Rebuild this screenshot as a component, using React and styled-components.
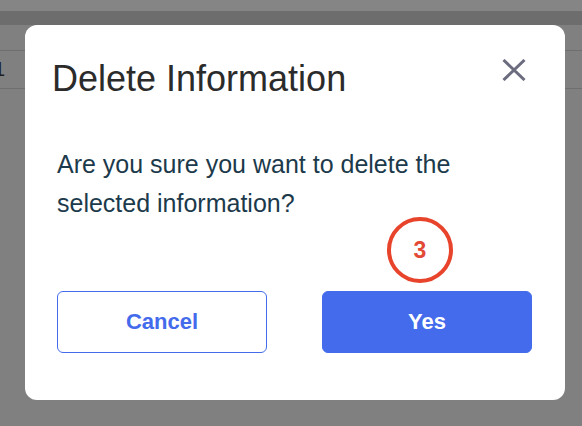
import styled, { createGlobalStyle } from "styled-components";

const GlobalStyle = createGlobalStyle`
  html, body {
    margin: 0;
    padding: 0;
    background: #808080;
    font-family: "Liberation Sans", Arial, sans-serif;
  }
`;

const App = () => {
  return (
    <>
      <GlobalStyle />
      <Page>
        <TopStrip />
        <SubBar />
        <TableRow>
          <Cell>1</Cell>
        </TableRow>
      </Page>
      <Overlay>
        <Modal>
          <Header>
            <Title>Delete Information</Title>
            <CloseButton aria-label="Close">
              <svg width="24" height="22" viewBox="0 0 24 22">
                <path d="M1.5 1 L22.5 21 M22.5 1 L1.5 21" stroke="#6b6d7f" strokeWidth="3" fill="none" />
              </svg>
            </CloseButton>
          </Header>
          <Message>
            Are you sure you want to delete the
            <br />
            selected information?
          </Message>
          <Actions>
            <ActionButton>Cancel</ActionButton>
            <ActionButton primary>Yes</ActionButton>
          </Actions>
          <StepBadge>3</StepBadge>
        </Modal>
      </Overlay>
    </>
  );
};

const Page = styled.div`
  display: flex;
  flex-direction: column;
  height: 426px;
`;

const TopStrip = styled.div`
  height: 11px;
  background: #858585;
`;

const SubBar = styled.div`
  height: 14px;
  background: #6d6d6d;
`;

const TableRow = styled.div`
  display: flex;
  align-items: center;
  margin-top: 25px;
  height: 37px;
  border-top: 1px solid #6f6f6f;
  border-bottom: 1px solid #6f6f6f;
`;

const Cell = styled.span`
  margin-left: -6px;
  font-size: 20px;
  color: #1e1e1e;
`;

const Overlay = styled.div`
  position: fixed;
  inset: 0;
  padding: 25px 17px 0 25px;
`;

const Modal = styled.div`
  position: relative;
  box-sizing: border-box;
  width: 540px;
  height: 375px;
  padding: 33px 33px 47px 32px;
  background: #ffffff;
  border-radius: 12px;
  display: flex;
  flex-direction: column;
`;

const Header = styled.div`
  display: flex;
  justify-content: space-between;
  align-items: flex-start;
  height: 42px;
`;

const Title = styled.h2`
  margin: 0 0 0 -5px;
  font-size: 36px;
  line-height: 42px;
  font-weight: 400;
  color: #2b2b2b;
`;

const CloseButton = styled.button`
  display: flex;
  margin: 1px 6px 0 0;
  padding: 0;
  border: none;
  background: none;
  cursor: pointer;
`;

const Message = styled.p`
  margin: 45px 0 0;
  font-size: 25px;
  line-height: 39px;
  color: #1c3a4b;
`;

const Actions = styled.div`
  display: grid;
  grid-template-columns: 210px 210px;
  justify-content: space-between;
  margin-top: 68px;
`;

const ActionButton = styled.button`
  height: 62px;
  border-radius: 6px;
  border: 1px solid #436beb;
  background: ${(p) => (p.primary ? "#436beb" : "#ffffff")};
  color: ${(p) => (p.primary ? "#ffffff" : "#436beb")};
  font-family: "Liberation Sans", Arial, sans-serif;
  font-size: 22px;
  font-weight: 700;
  cursor: pointer;
`;

const StepBadge = styled.div`
  position: absolute;
  left: 362px;
  top: 192px;
  box-sizing: border-box;
  width: 66px;
  height: 66px;
  border: 4px solid #e8432b;
  border-radius: 50%;
  display: flex;
  align-items: center;
  justify-content: center;
  color: #e24a36;
  font-size: 23px;
  font-weight: 700;
`;

export default App;
